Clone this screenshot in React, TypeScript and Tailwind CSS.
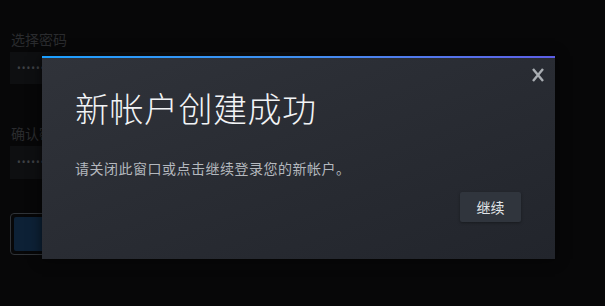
export default function App() {
  return (
    <div
      className="relative w-[605px] h-[306px] overflow-hidden bg-[#070708]"
      style={{ fontFamily: '"Noto Sans", "Noto Sans CJK SC", sans-serif' }}
    >
      {/* background form (dimmed behind modal) */}
      <div className="flex flex-col w-[300px] pl-[10px] pt-[31px]">
        <label className="text-[14px] leading-[18px] text-[#2a2b2e] pl-[1px]">选择密码</label>
        <div className="mt-[3px] h-[32px] bg-[#0e0f11] flex items-center pl-[7px] text-[#3f4145] text-[10px] tracking-[1px]">
          ••••••
        </div>
        <label className="mt-[41px] text-[14px] leading-[18px] text-[#2a2b2e] pl-[1px]">确认密码</label>
        <div className="mt-[3px] h-[33px] bg-[#0e0f11] flex items-center pl-[7px] text-[#3f4145] text-[10px] tracking-[1px]">
          ••••••
        </div>
        <div className="mt-[34px] h-[42px] w-[200px] rounded-[4px] border border-[#2f3338] p-[3px]">
          <div className="h-full rounded-[2px] bg-[#0d2136]" />
        </div>
      </div>

      {/* modal */}
      <div className="absolute left-[42px] top-[56px] w-[513px] h-[203px] bg-gradient-to-br from-[#30333a] to-[#22252c] shadow-[0_0_12px_rgba(0,0,0,0.6)]">
        <div className="h-[2px] bg-gradient-to-r from-[#1a9fff] via-[#3f8ff0] to-[#5c5ee6]" />
        <button
          type="button"
          aria-label="关闭"
          className="absolute right-[11px] top-[12px] w-[12px] h-[14px] text-[#a9adb2]"
        >
          <svg width="12" height="14" viewBox="0 0 12 14" fill="none">
            <path d="M1 1 L11 13 M11 1 L1 13" stroke="currentColor" strokeWidth="2.4" />
          </svg>
        </button>
        <div className="flex flex-col pl-[33px] pr-[34px]">
          <h1 className="mt-[28px] text-[34px] leading-[46px] font-light text-[#f2f4f6] tracking-[0.5px]">
            新帐户创建成功
          </h1>
          <p className="mt-[28px] text-[14px] leading-[18px] text-[#b4b8be] tracking-[0.5px]">
            请关闭此窗口或点击继续登录您的新帐户。
          </p>
          <div className="flex justify-end mt-[14px]">
            <button
              type="button"
              className="w-[61px] h-[30px] bg-[#30353d] text-[#e1e5e8] text-[14px] rounded-[2px] shadow-[0_1px_3px_rgba(0,0,0,0.35)]"
            >
              继续
            </button>
          </div>
        </div>
      </div>
    </div>
  );
}
